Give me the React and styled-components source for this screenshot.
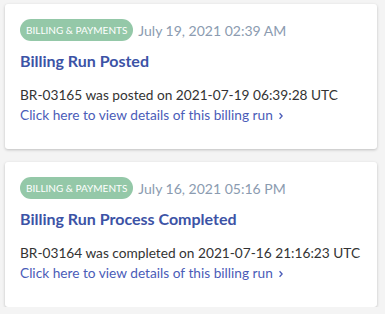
import styled, { createGlobalStyle } from "styled-components";

const GlobalStyle = createGlobalStyle`
  html, body {
    margin: 0;
    padding: 0;
    background: #f4f4f4;
    font-family: Lato, "Open Sans", sans-serif;
  }
`;

const notifications = [
  {
    id: "BR-03165",
    category: "Billing & Payments",
    date: "July 19, 2021 02:39 AM",
    title: "Billing Run Posted",
    body: "BR-03165 was posted on 2021-07-19 06:39:28 UTC",
  },
  {
    id: "BR-03164",
    category: "Billing & Payments",
    date: "July 16, 2021 05:16 PM",
    title: "Billing Run Process Completed",
    body: "BR-03164 was completed on 2021-07-16 21:16:23 UTC",
  },
];

export default function App() {
  return (
    <>
      <GlobalStyle />
      <List>
        {notifications.map((n) => (
          <Card key={n.id}>
            <Meta>
              <Badge>{n.category}</Badge>
              <DateText>{n.date}</DateText>
            </Meta>
            <Title>{n.title}</Title>
            <Body>{n.body}</Body>
            <DetailsLink href="#">
              Click here to view details of this billing run
              <Chevron viewBox="0 0 6 10" aria-hidden="true">
                <path d="M1.2 1.5 L4.4 5 L1.2 8.5" />
              </Chevron>
            </DetailsLink>
          </Card>
        ))}
      </List>
    </>
  );
}

const List = styled.div`
  display: flex;
  flex-direction: column;
  gap: 13px;
  padding: 4px 8px 0 5px;
`;

const Card = styled.div`
  background: #fff;
  border-radius: 3px;
  box-shadow: 0 1px 3px rgba(0, 0, 0, 0.22);
  padding: 15px 15px 26px;
  height: 145px;
  box-sizing: border-box;
`;

const Meta = styled.div`
  display: flex;
  align-items: center;
  gap: 5px;
`;

const Badge = styled.span`
  display: inline-flex;
  align-items: center;
  height: 22px;
  padding: 0 6px;
  border-radius: 11px;
  background: #94c8a8;
  color: #fff;
  font-size: 10px;
  text-transform: uppercase;
`;

const DateText = styled.span`
  font-size: 14px;
  color: #8b9bb0;
`;

const Title = styled.h2`
  margin: 10px 0 15px;
  font-size: 16px;
  font-weight: 700;
  color: #3c53a6;
  line-height: 20px;
`;

const Body = styled.p`
  margin: 0;
  font-size: 13.7px;
  line-height: 18px;
  color: #333;
  white-space: nowrap;
`;

const DetailsLink = styled.a`
  display: inline-flex;
  align-items: center;
  gap: 5px;
  font-size: 13.7px;
  line-height: 18px;
  color: #4a5cb8;
  text-decoration: none;
`;

const Chevron = styled.svg`
  width: 6px;
  height: 8px;
  margin-top: 2px;
  fill: none;
  stroke: currentColor;
  stroke-width: 1.6;
`;
